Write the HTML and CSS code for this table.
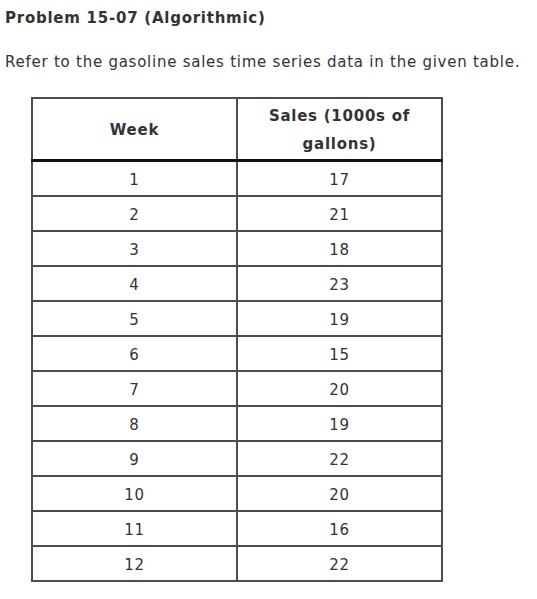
FILE: index.html
```html
<!DOCTYPE html>
<html>
<head>
<meta charset="utf-8">
<link rel="stylesheet" href="styles.css">
</head>
<body>
<div class="page">
  <h1 class="title">Problem 15-07 (Algorithmic)</h1>
  <p class="intro">Refer to the gasoline sales time series data in the given table.</p>
  <table class="data">
    <thead>
      <tr><th>Week</th><th>Sales (1000s of<br>gallons)</th></tr>
    </thead>
    <tbody>
      <tr><td>1</td><td>17</td></tr>
      <tr><td>2</td><td>21</td></tr>
      <tr><td>3</td><td>18</td></tr>
      <tr><td>4</td><td>23</td></tr>
      <tr><td>5</td><td>19</td></tr>
      <tr><td>6</td><td>15</td></tr>
      <tr><td>7</td><td>20</td></tr>
      <tr><td>8</td><td>19</td></tr>
      <tr><td>9</td><td>22</td></tr>
      <tr><td>10</td><td>20</td></tr>
      <tr><td>11</td><td>16</td></tr>
      <tr><td>12</td><td>22</td></tr>
    </tbody>
  </table>
</div>
</body>
</html>
```
FILE: styles.css
```css
html, body {
  margin: 0;
  padding: 0;
  background: #fff;
}
.page {
  padding: 8px 5px;
  font-family: "DejaVu Sans", Verdana, sans-serif;
  font-size: 15px;
  letter-spacing: 0.75px;
  color: #333;
}
.title {
  font-size: 15px;
  font-weight: bold;
  margin: 0;
  line-height: 20px;
}
.intro {
  margin: 24px 0 0;
  line-height: 20px;
}
.data {
  margin: 25px 0 0 26px;
  border-collapse: collapse;
  width: 412px;
  border: 2px solid #4d4d4d;
}
.data th, .data td {
  width: 50%;
  text-align: center;
  border: 2px solid #4d4d4d;
  padding: 0;
}
.data th {
  height: 58px;
  padding-top: 2px;
  line-height: 28px;
  font-weight: bold;
  border-bottom: 3px solid #111;
}
.data td {
  height: 31px;
  padding-top: 2px;
}
```
